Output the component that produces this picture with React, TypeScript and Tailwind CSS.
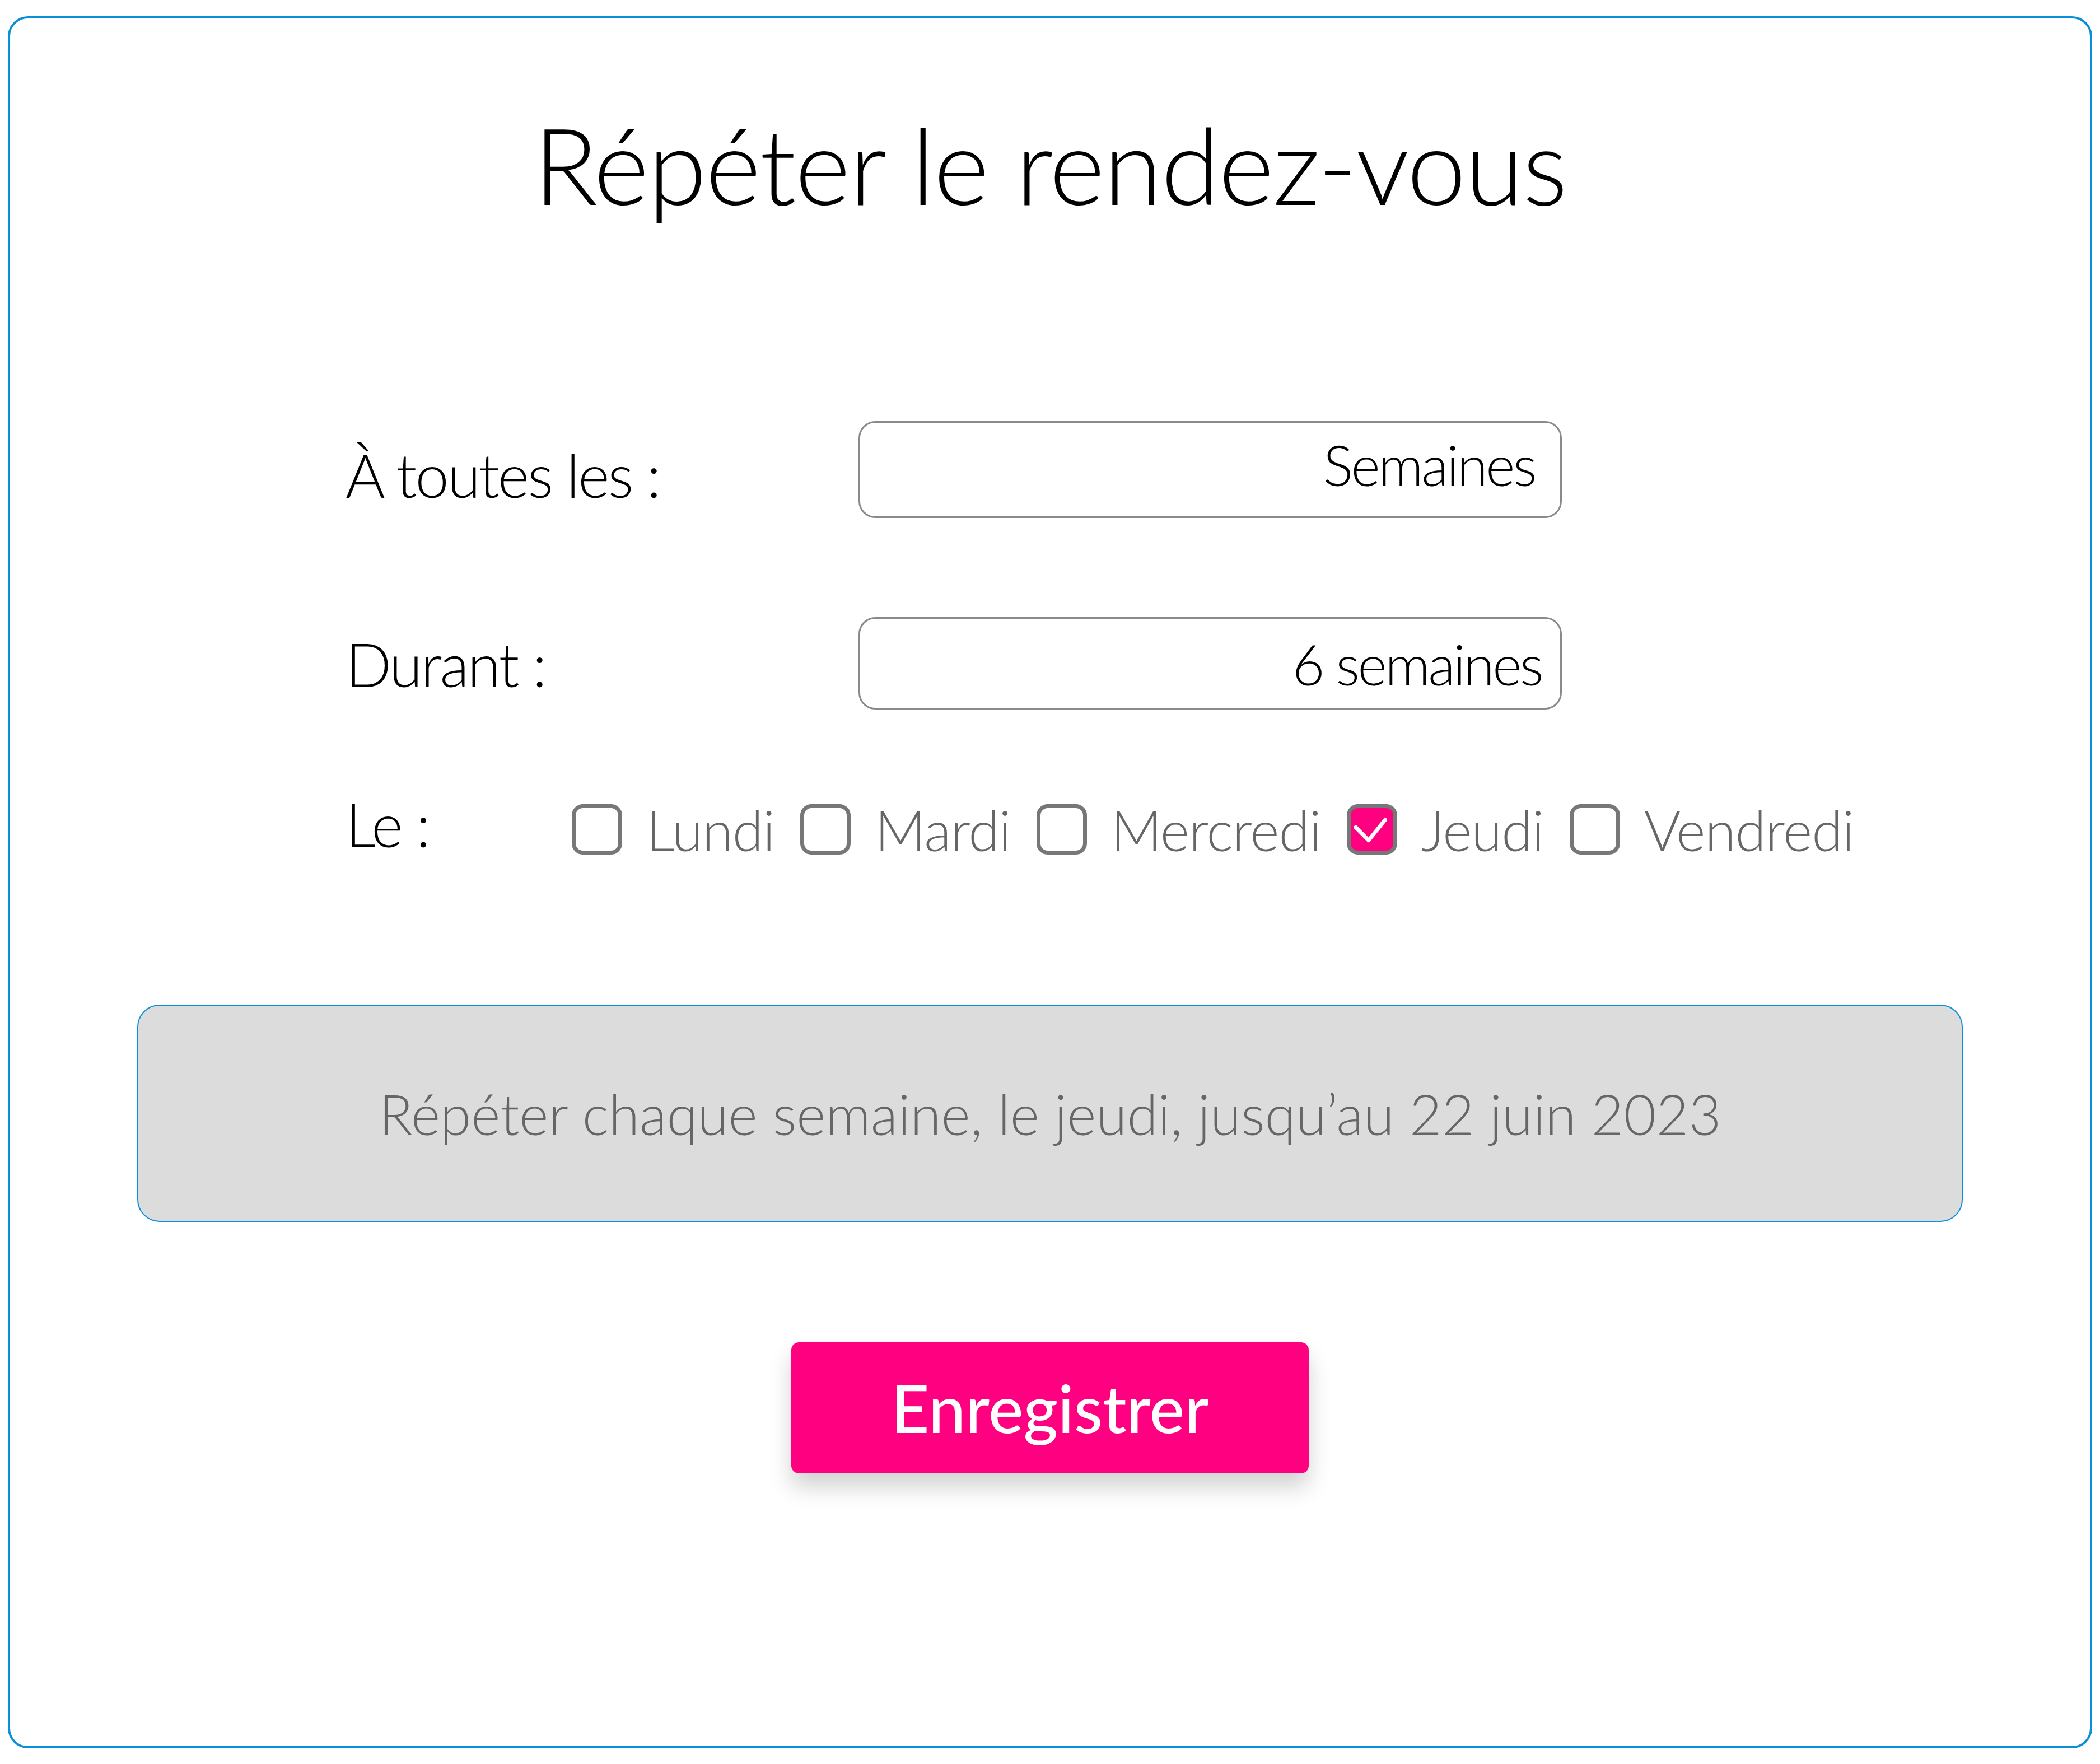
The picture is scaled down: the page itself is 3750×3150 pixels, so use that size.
import React from 'react';

const days = [
  { name: 'Lundi', checked: false },
  { name: 'Mardi', checked: false },
  { name: 'Mercredi', checked: false },
  { name: 'Jeudi', checked: true },
  { name: 'Vendredi', checked: false },
];

const DayCheckbox: React.FC<{ name: string; checked: boolean }> = ({ name, checked }) => (
  <div className="flex items-center gap-[43px]">
    <div
      className={`flex h-[90px] w-[90px] items-center justify-center rounded-[20px] border-[7px] border-[#777777] ${
        checked ? 'bg-[#ff0080]' : 'bg-white'
      }`}
    >
      {checked && (
        <svg width="76" height="76" viewBox="0 0 24 24" fill="none">
          <path d="M2.8 10.8l7.3 7.4L19.4 6.6" stroke="#ffffff" strokeWidth="2.2" strokeLinecap="round" strokeLinejoin="round" />
        </svg>
      )}
    </div>
    <span className="text-[100px] leading-none font-light tracking-[-1px] text-[#666666]">{name}</span>
  </div>
);

export default function App() {
  return (
    <div className="min-h-screen bg-white pl-[14px] pt-[29px]" style={{ fontFamily: 'Lato, "Noto Sans", sans-serif' }}>
      <div className="flex h-[3093px] w-[3722px] flex-col items-center rounded-[36px] border-[4px] border-[#0a8fd9]">
        <h1 className="mt-[164px] text-[190px] leading-none font-light tracking-[-2px] text-black">Répéter le rendez-vous</h1>

        <div className="mt-[365px] flex flex-col self-stretch pl-[599px]">
          <div className="flex items-center">
            <span className="mt-[16px] w-[916px] text-[108px] leading-none font-light tracking-[-3px] text-black">
              À toutes les :
            </span>
            <div className="flex h-[173px] w-[1256px] items-center justify-end rounded-[30px] border-[3px] border-[#8a8a8a] pr-[45px]">
              <span className="mb-[20px] text-[100px] leading-none font-light tracking-[-3.5px] text-black">Semaines</span>
            </div>
          </div>

          <div className="mt-[177px] flex items-center">
            <span className="w-[916px] text-[108px] leading-none font-light tracking-[-3px] text-black">Durant :</span>
            <div className="flex h-[165px] w-[1256px] items-center justify-end rounded-[30px] border-[3px] border-[#8a8a8a] pr-[33px]">
              <span className="text-[100px] leading-none font-light tracking-[-3.5px] text-black">6 semaines</span>
            </div>
          </div>

          <div className="mt-[150px] flex items-center">
            <span className="mb-[20px] w-[404px] text-[108px] leading-none font-light tracking-[-3px] text-black">Le :</span>
            <div className="flex items-center gap-[46px]">
              {days.map((d) => (
                <DayCheckbox key={d.name} name={d.name} checked={d.checked} />
              ))}
            </div>
          </div>
        </div>

        <div className="mt-[249px] flex h-[388px] w-[3260px] items-center justify-center rounded-[40px] border-[2px] border-[#0a8fd9] bg-[#dcdcdc]">
          <span className="text-[100px] leading-none font-light text-[#666666]">
            Répéter chaque semaine, le jeudi, jusqu’au 22 juin 2023
          </span>
        </div>

        <button className="mt-[215px] flex h-[234px] w-[924px] items-center justify-center rounded-[14px] bg-[#ff0080] shadow-[0_24px_40px_rgba(0,0,0,0.18)]">
          <span className="text-[118px] leading-none font-medium text-white">Enregistrer</span>
        </button>
      </div>
    </div>
  );
}
